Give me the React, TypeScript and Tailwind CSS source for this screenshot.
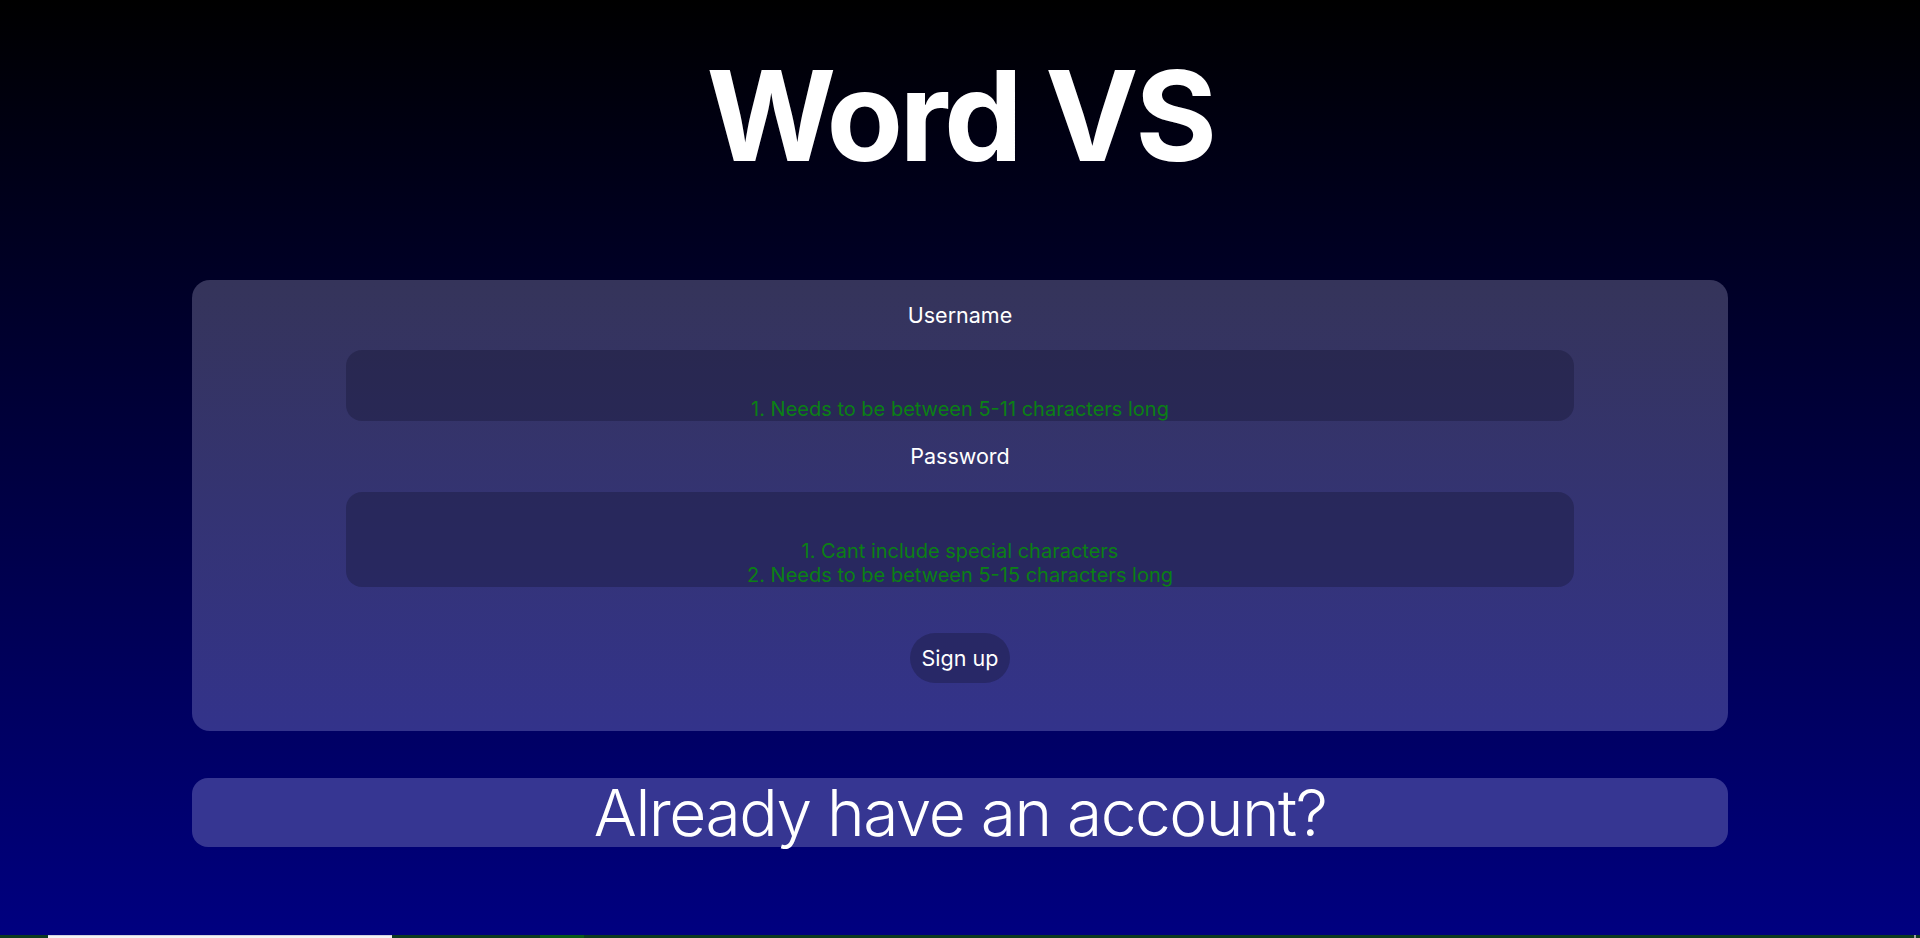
import React from "react";

// Sign up page for Word VS
const font = { fontFamily: "Inter, 'Noto Sans', sans-serif" };

const App: React.FC = () => {
  return (
    <div className="flex min-h-screen flex-col" style={font}>
      <main className="flex flex-1 flex-col items-center bg-linear-to-b/srgb from-black to-[#000080]">
        {/* Title */}
        <h1 className="pt-[53px] text-[125px] font-bold leading-none tracking-[-3.5px] text-white">
          Word VS
        </h1>

        {/* Sign up card */}
        <div className="mt-[102px] flex w-[1536px] flex-col items-center rounded-[18px] bg-linear-to-b/srgb from-[#35345a] to-[#33338b] pt-[23px] pb-[48px]">
          <label className="text-[21.5px] leading-[24px] text-white">Username</label>
          <div className="mt-[23px] flex h-[71px] w-[1228px] items-end justify-center rounded-2xl bg-[rgba(20,20,50,0.35)]">
            <p className="text-center text-[20px] leading-[24px] text-[#0b8014]">
              1. Needs to be between 5-11 characters long
            </p>
          </div>

          <label className="mt-[23px] text-[21.5px] leading-[24px] text-white">Password</label>
          <div className="mt-[24px] flex h-[95px] w-[1228px] items-end justify-center rounded-2xl bg-[rgba(20,20,50,0.35)]">
            <p className="text-center text-[20px] leading-[24px] text-[#0b8014]">
              1. Cant include special characters
              <br />
              2. Needs to be between 5-15 characters long
            </p>
          </div>

          <button className="mt-[46px] h-[50px] w-[100px] rounded-full bg-[rgba(20,20,50,0.35)] text-[21.5px] text-white">
            Sign up
          </button>
        </div>

        {/* Login link */}
        <div className="mt-[47px] flex h-[69px] w-[1536px] items-center justify-center rounded-2xl bg-[#363692]">
          <span className="text-[64px] font-light leading-none tracking-[-1.5px] text-white">
            Already have an account?
          </span>
        </div>
      </main>

      {/* thin strip at the very bottom */}
      <div className="flex h-[3px] bg-[#0d3a20]">
        <div className="w-[48px]" />
        <div className="w-[344px] border-t border-[#d0d0e0] bg-[#f2f2f2]" />
        <div className="w-[148px]" />
        <div className="w-[44px] bg-[#0a5a18]" />
        <div className="flex-1" />
        <div className="w-[2px] bg-[#a0a0a0]" />
        <div className="w-[4px]" />
      </div>
    </div>
  );
};

export default App;
